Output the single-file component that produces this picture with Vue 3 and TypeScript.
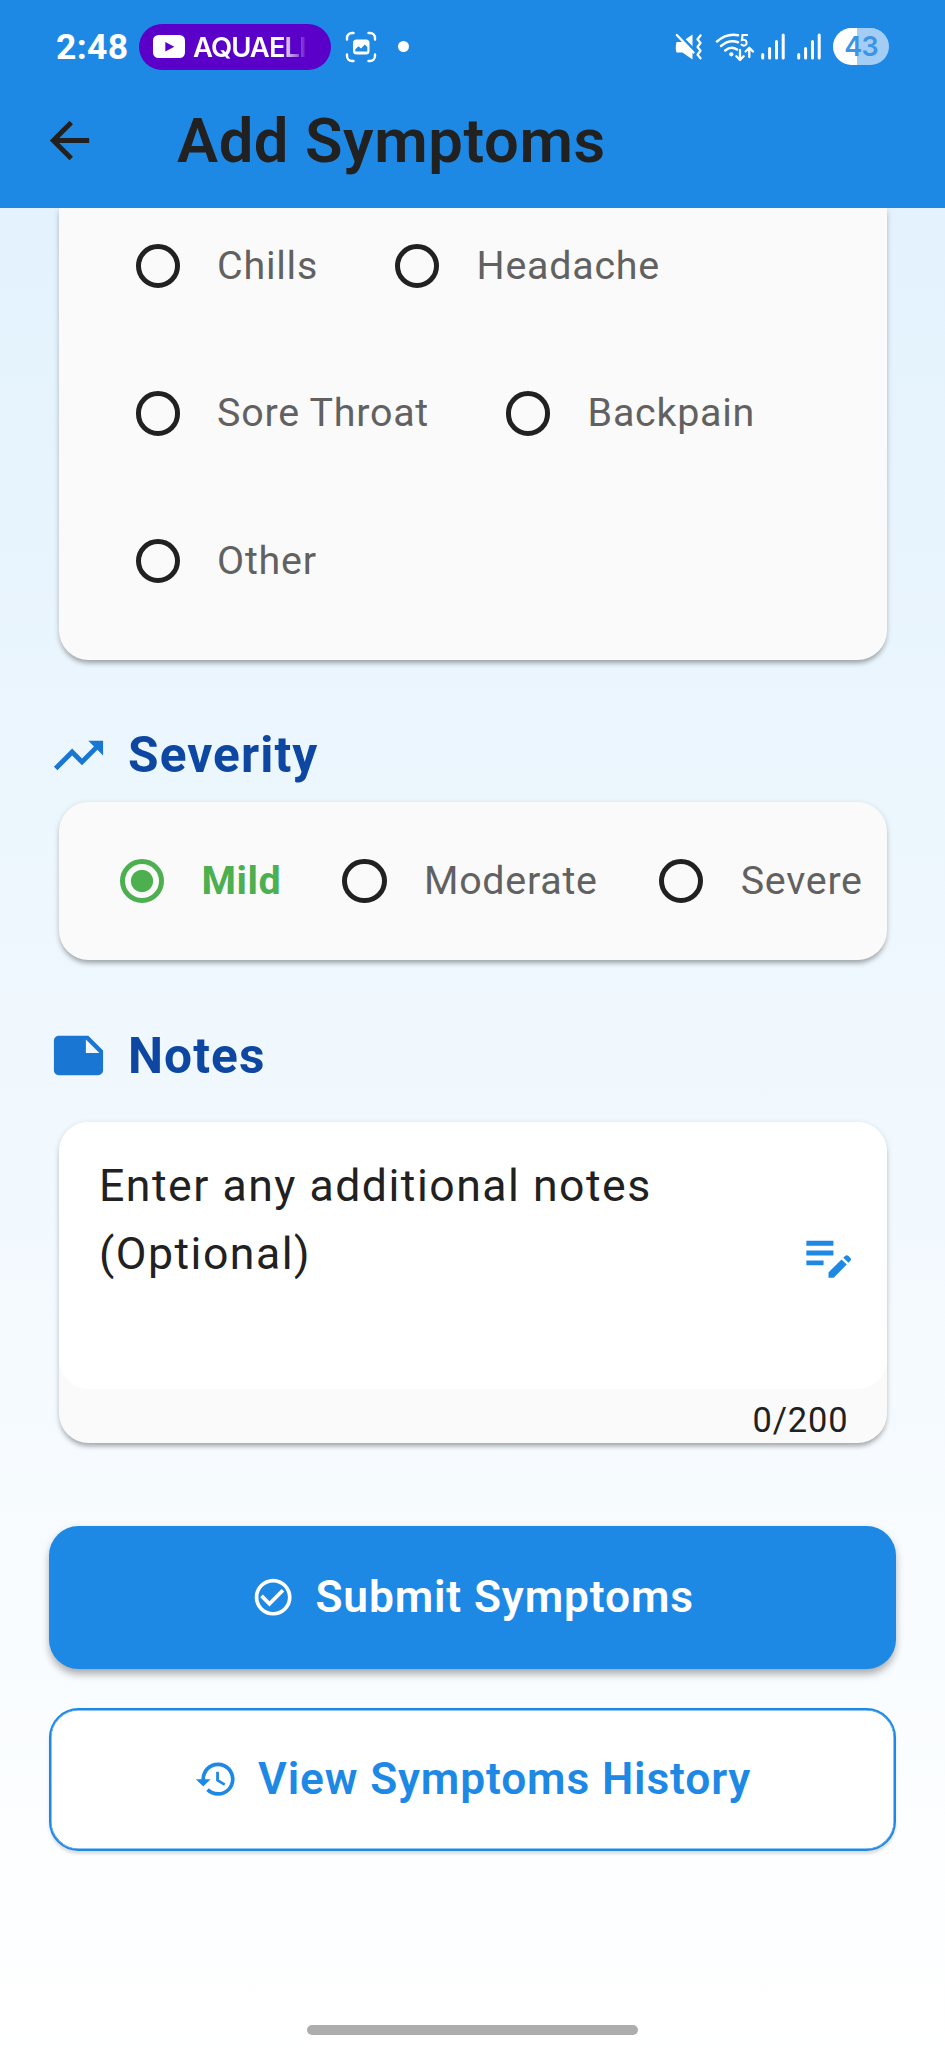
<script setup lang="ts">
import { ref } from 'vue'

interface Option {
  label: string
}

const symptomRows: Option[][] = [
  [{ label: 'Chills' }, { label: 'Headache' }],
  [{ label: 'Sore Throat' }, { label: 'Backpain' }],
  [{ label: 'Other' }],
]
const severities: string[] = ['Mild', 'Moderate', 'Severe']

const symptom = ref<string>('')
const severity = ref<string>('Mild')
const noteLength = ref<number>(0)
</script>

<template>
  <div class="screen">
    <header class="top">
      <div class="status">
        <span class="time">2:48</span>
        <div class="chip">
          <svg class="yt" viewBox="0 0 32 23">
            <rect width="32" height="23" rx="5.5" fill="#fff" />
            <path d="M12.3 7v9.6l9-4.8z" fill="#5a00c8" />
          </svg>
          <span class="chip-text">AQUAELI</span>
        </div>
        <svg class="capture" viewBox="0 0 32 32">
          <g fill="none" stroke="#fff" stroke-width="2.4" stroke-linecap="round">
            <path d="M2 8.5V7a5 5 0 0 1 5-5h1.5M23.5 2H25a5 5 0 0 1 5 5v1.5M30 23.500V25a5 5 0 0 1-5 5h-1.500M8.500 30H7a5 5 0 0 1-5-5v-1.500" />
          </g>
          <rect x="8" y="8.500" width="16.500" height="15" rx="3.500" fill="#fff" />
          <path d="M10.300 20.500v-2.300l3.200-3 2.500 2.300 3.800-4 2.500 2.500v4.500z" fill="#1e88e5" />
        </svg>
        <span class="dot"></span>
        <span class="grow"></span>
        <svg class="mute" viewBox="0 0 28 28">
          <path d="M1.500 9h5L17.500 1.500v25L7.500 19.500h-6q-1.500-4 0-10.500z" fill="#fff" />
          <path d="M3.300 1 19 17" stroke="#1e88e5" stroke-width="3.200" />
          <path d="M1.800 2 18.500 19.500" stroke="#fff" stroke-width="2.400" stroke-linecap="round" />
          <path d="M25.500 2.500l-3 3.700 3 3.800-3 3.900 3 3.900-3 3.800 3 3.700" fill="none" stroke="#fff" stroke-width="2.300" stroke-linecap="round" stroke-linejoin="round" />
        </svg>
        <svg class="wifi" viewBox="0 0 40 30">
          <g fill="none" stroke="#fff" stroke-width="2.500" stroke-linecap="round">
            <path d="M2 9.500Q11.500 1 23 3.200" />
            <path d="M6 14q8-7 17-3.800" />
            <path d="M10.200 18.500q6-5 11.800-1" />
          </g>
          <circle cx="16.300" cy="22.300" r="2.100" fill="#fff" />
          <path d="M33 3h-5.500l-.6 5c5.500-1.600 6.300 5.600 1.800 5.600-1.300 0-2.200-.6-2.800-1.400" fill="none" stroke="#fff" stroke-width="2.100" />
          <path d="M25 18v9.500M21.300 24.300 25 28l3.700-3.700M34.300 25v-8.500M30.600 19.500l3.700-3.700 3.700 3.700" fill="none" stroke="#fff" stroke-width="2.300" stroke-linecap="round" stroke-linejoin="round" />
        </svg>
        <svg v-for="n in 2" :key="n" class="signal" viewBox="0 0 24 27">
          <path d="M1.700 21.500v3.500M8.600 15.500V25M15.500 8.500V25M22.200 2v23" stroke="#fff" stroke-width="3" stroke-linecap="round" />
        </svg>
        <span class="battery">43</span>
      </div>
      <div class="appbar">
        <svg class="back" viewBox="0 0 24 24"><path fill="#212121" d="M20 11H7.830l5.590-5.590L12 4l-8 8 8 8 1.410-1.410L7.830 13H20v-2z" /></svg>
        <h1>Add Symptoms</h1>
      </div>
    </header>

    <main class="body">
      <section class="card symptoms">
        <div v-for="(row, i) in symptomRows" :key="i" class="row">
          <label v-for="o in row" :key="o.label" class="option" @click="symptom = o.label">
            <span class="radio" :class="{ on: symptom === o.label }"></span>
            <span class="label" :class="{ picked: symptom === o.label }">{{ o.label }}</span>
          </label>
        </div>
      </section>

      <h2 class="heading severity-heading">
        <svg viewBox="0 0 24 24"><path fill="#1976d2" d="M16 6l2.290 2.290-4.880 4.880-4-4L2 16.590 3.410 18l6-6 4 4 6.300-6.290L22 12V6z" /></svg>
        <span>Severity</span>
      </h2>
      <section class="card severity">
        <label v-for="s in severities" :key="s" class="option" @click="severity = s">
          <span class="radio" :class="{ on: severity === s }"></span>
          <span class="label" :class="{ picked: severity === s }">{{ s }}</span>
        </label>
      </section>

      <h2 class="heading notes-heading">
        <svg viewBox="0 0 24 24"><path fill="#1976d2" d="M22 10l-6-6H4c-1.100 0-2 .9-2 2v12.010c0 1.100.9 1.990 2 1.990l16-.010c1.100 0 2-.890 2-1.990v-8zm-7-4.500l5.500 5.500H15V5.500z" /></svg>
        <span>Notes</span>
      </h2>
      <section class="card notes">
        <div class="field">
          <p>Enter any additional notes (Optional)</p>
          <svg viewBox="0 0 24 24"><path fill="#1e88e5" d="M3 10h11v2H3v-2zm0-2h11V6H3v2zm0 8h7v-2H3v2zm15.010-3.130l.710-.710c.390-.390 1.020-.390 1.410 0l.710.710c.390.390.390 1.020 0 1.410l-.710.710-2.120-2.120zm-.710.710l-5.300 5.300V21h2.120l5.300-5.300-2.120-2.120z" /></svg>
        </div>
        <div class="counter">{{ noteLength }}/200</div>
      </section>

      <button class="btn primary" type="button">
        <svg viewBox="0 0 24 24"><path fill="currentColor" d="M16.590 7.580L10 14.170l-3.590-3.580L5 12l5 5 8-8zM12 2C6.480 2 2 6.480 2 12s4.480 10 10 10 10-4.480 10-10S17.520 2 12 2zm0 18c-4.420 0-8-3.580-8-8s3.580-8 8-8 8 3.580 8 8-3.580 8-8 8z" /></svg>
        <span>Submit Symptoms</span>
      </button>
      <button class="btn outline" type="button">
        <svg viewBox="0 0 24 24"><path fill="currentColor" d="M13 3c-4.970 0-9 4.030-9 9H1l3.890 3.890.070.140L9 12H6c0-3.870 3.130-7 7-7s7 3.130 7 7-3.130 7-7 7c-1.930 0-3.680-.790-4.940-2.060l-1.420 1.420C8.270 19.990 10.510 21 13 21c4.970 0 9-4.030 9-9s-4.030-9-9-9zm-1 5v5l4.280 2.540.720-1.210-3.500-2.080V8H12z" /></svg>
        <span>View Symptoms History</span>
      </button>
      <div class="home-bar"></div>
    </main>
  </div>
</template>

<style>
body {
  margin: 0;
}
</style>

<style scoped>
.screen {
  box-sizing: border-box;
  width: 945px;
  height: 2048px;
  overflow: hidden;
  display: flex;
  flex-direction: column;
  font-family: Roboto, "Liberation Sans", sans-serif;
  color: #212121;
}
svg {
  display: block;
  flex: none;
}
.top {
  height: 208px;
  flex: none;
  background: #1e88e5;
}
.status {
  display: flex;
  align-items: center;
  height: 93px;
  padding: 0 56px;
}
.time {
  width: 83px;
  font: 700 35.500px/40px Roboto, sans-serif;
  letter-spacing: 0.300px;
  color: #fff;
}
.chip {
  box-sizing: border-box;
  display: flex;
  align-items: center;
  width: 192px;
  height: 46px;
  padding-left: 14px;
  border-radius: 23px;
  background: #5a00c8;
}
.yt {
  width: 32px;
  height: 23px;
}
.chip-text {
  width: 118px;
  margin-left: 8px;
  overflow: hidden;
  font: 600 27.500px/34px Inter, sans-serif;
  letter-spacing: -1px;
  color: #fff;
  white-space: nowrap;
  mask-image: linear-gradient(90deg, #000 74%, transparent 98%);
}
.capture {
  width: 32px;
  height: 32px;
  margin-left: 14px;
}
.dot {
  width: 11px;
  height: 11px;
  margin-left: 21px;
  border-radius: 50%;
  background: #fff;
}
.grow {
  flex: 1;
}
.mute {
  width: 28px;
  height: 28px;
}
.wifi {
  width: 40px;
  height: 30px;
  margin-left: 12px;
}
.signal {
  width: 24px;
  height: 27px;
  margin-left: 6px;
}
.signal + .signal {
  margin-left: 12px;
}
.battery {
  width: 56px;
  height: 37px;
  margin-left: 12px;
  border-radius: 19px;
  background: linear-gradient(90deg, #fff 43%, #a3cdf4 43%);
  font: 600 27px/37px Inter, sans-serif;
  letter-spacing: -0.800px;
  text-align: center;
  color: #3b94e6;
}
.appbar {
  display: flex;
  align-items: center;
  height: 94px;
  padding-left: 40px;
}
.back {
  width: 59px;
  height: 59px;
}
h1 {
  margin: 1px 0 0 78px;
  font-size: 61.500px;
  font-weight: 600;
  letter-spacing: 0.600px;
  line-height: 70px;
  white-space: nowrap;
}
.body {
  flex: 1;
  display: flex;
  flex-direction: column;
  background: linear-gradient(180deg, #e3f2fd, #fff);
}
.card {
  box-sizing: border-box;
  flex: none;
  margin: 0 58.500px 0 59px;
  border-radius: 29.500px;
  background: #fafafa;
  box-shadow: 0 5px 5px -2px rgba(0, 0, 0, 0.24), 0 2px 6px rgba(0, 0, 0, 0.16);
}
.symptoms {
  display: flex;
  flex-direction: column;
  gap: 47.700px;
  height: 452px;
  padding: 7.700px 0 0 76.500px;
  border-radius: 0 0 29.500px 29.500px;
  clip-path: inset(0 -20px -20px -20px);
}
.row {
  display: flex;
  gap: 77px;
  height: 100px;
}
.option {
  display: flex;
  align-items: center;
}
.radio {
  box-sizing: border-box;
  width: 44.300px;
  height: 44.300px;
  border: 5px solid #212121;
  border-radius: 50%;
}
.radio.on {
  border-color: #4caf50;
  background: radial-gradient(circle, #4caf50 10.600px, transparent 11.600px);
}
.label {
  margin-left: 37.300px;
  font-size: 39.400px;
  letter-spacing: 0.750px;
  line-height: 56px;
  white-space: nowrap;
  color: #616161;
}
.label.picked {
  font-weight: 700;
  letter-spacing: 0.500px;
  color: #4caf50;
}
.heading {
  display: flex;
  align-items: center;
  height: 60px;
  flex: none;
  margin: 0 0 0 49px;
  font-size: 49.600px;
  font-weight: 700;
  letter-spacing: 1.100px;
  line-height: 60px;
  color: #0d47a1;
}
.heading svg {
  width: 59px;
  height: 59px;
}
.heading span {
  margin-left: 20px;
}
.severity-heading {
  margin-top: 65px;
  margin-bottom: 17px;
}
.severity {
  display: flex;
  gap: 61.300px;
  height: 158px;
  padding-left: 61px;
}
.notes-heading {
  margin-top: 65.500px;
  margin-bottom: 36.500px;
}
.notes {
  height: 320.500px;
}
.field {
  box-sizing: border-box;
  display: flex;
  align-items: center;
  justify-content: space-between;
  height: 267px;
  padding: 0 29px 0 40px;
  border-radius: 29.500px;
  background: #fff;
}
.field p {
  width: 600px;
  margin: 0;
  align-self: flex-start;
  padding-top: 30px;
  font-size: 44.600px;
  letter-spacing: 1.500px;
  line-height: 68px;
}
.field svg {
  width: 59px;
  height: 59px;
}
.counter {
  margin-right: 38px;
  font-size: 34.400px;
  letter-spacing: 0.900px;
  line-height: 40px;
  padding-top: 11px;
  text-align: right;
}
.btn {
  box-sizing: border-box;
  display: flex;
  align-items: center;
  justify-content: center;
  gap: 20px;
  flex: none;
  height: 143px;
  margin: 0 49px;
  padding: 0;
  border: 0;
  border-radius: 29.500px;
  font: 600 44.300px/56px Roboto, "Liberation Sans", sans-serif;
  letter-spacing: 0.850px;
}
.btn svg {
  width: 44.300px;
  height: 44.300px;
}
.primary {
  margin-top: 83px;
  background: #1e88e5;
  color: #fff;
  box-shadow: 0 7px 8px -2px rgba(0, 0, 0, 0.24), 0 3px 9px rgba(0, 0, 0, 0.15);
}
.outline {
  margin-top: 39.500px;
  border: 2px solid #1e88e5;
  background: #fff;
  color: #1e88e5;
  box-shadow: inset 0 0 0 0.500px #1e88e5, 0 3px 3px rgba(0, 0, 0, 0.13);
}
.outline span {
  margin-top: -2px;
}
.home-bar {
  width: 331px;
  height: 10px;
  margin: auto 0 13px 307px;
  border-radius: 5px;
  background: #adadad;
}
</style>
